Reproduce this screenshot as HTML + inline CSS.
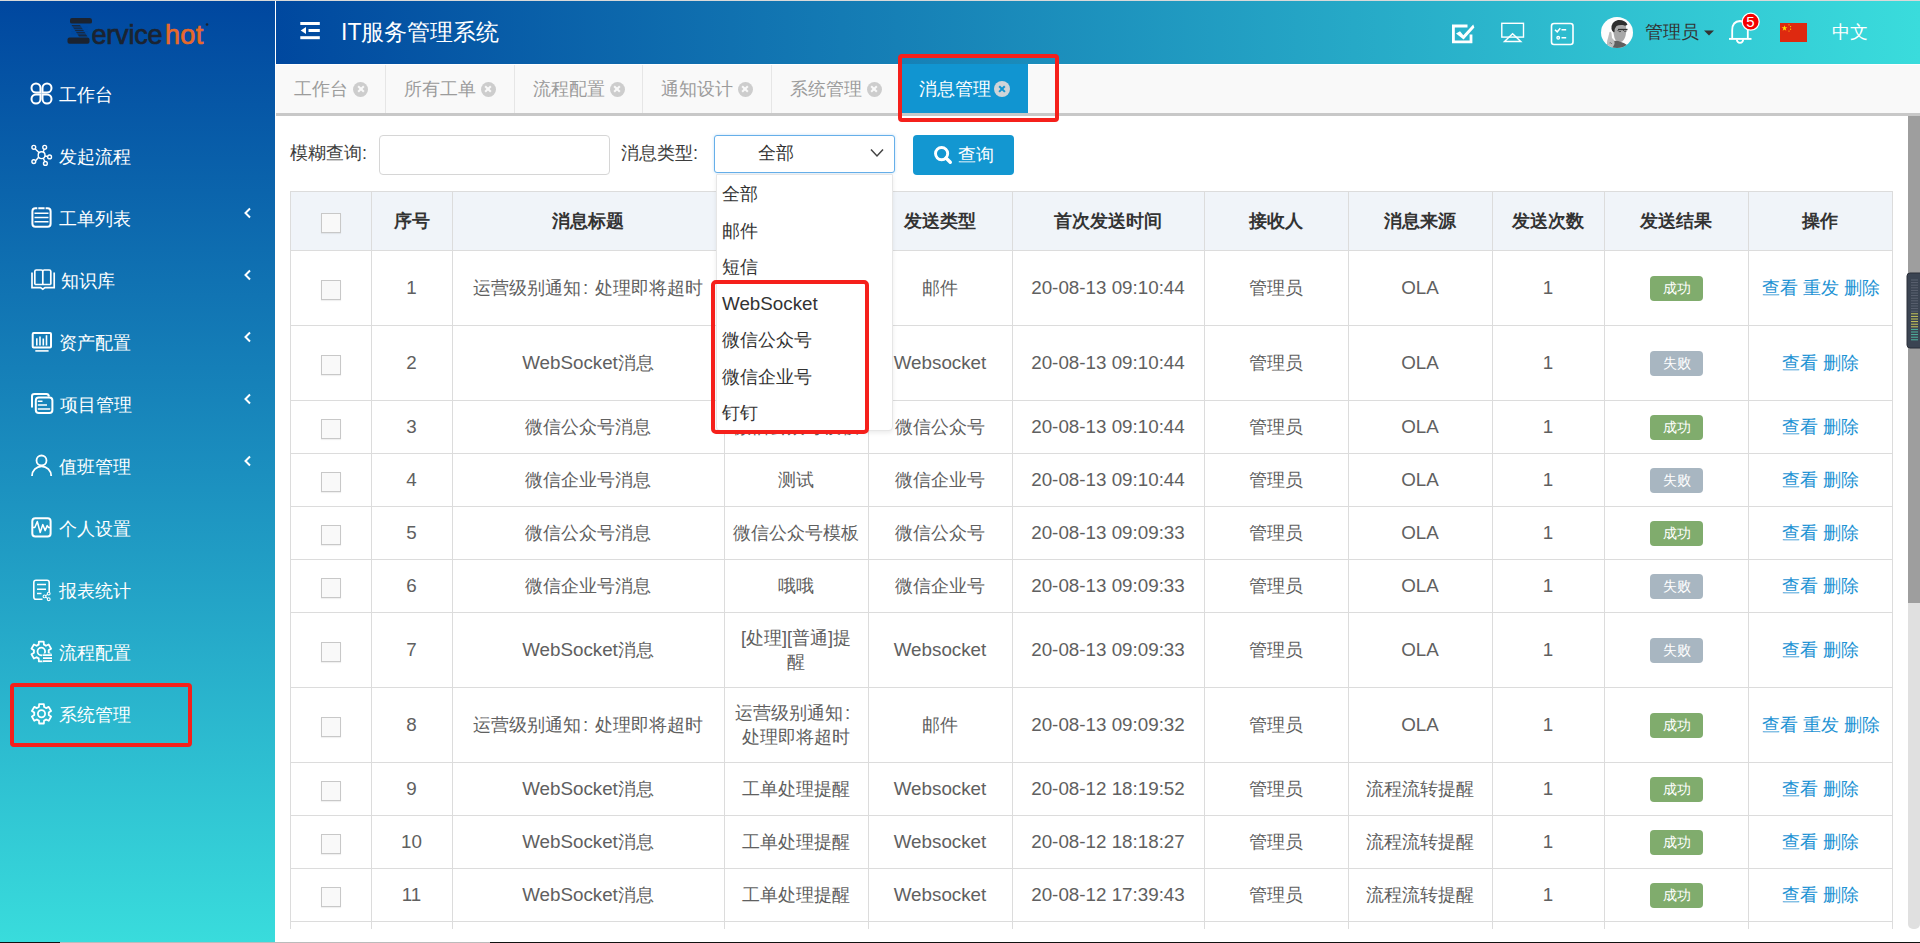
<!DOCTYPE html><html><head><meta charset="utf-8"><style>
*{box-sizing:border-box}
html,body{margin:0;padding:0;width:1920px;height:943px;overflow:hidden;background:#fff;font-family:"Liberation Sans",sans-serif;}
.a{position:absolute}
#topline{left:0;top:0;width:1920px;height:1px;background:#d9d9d9}
#side{left:0;top:1px;width:275px;height:942px;background:linear-gradient(to bottom,#00479f 0%,#1b8fbf 50%,#39dcdc 100%)}
#hdr{left:276px;top:1px;width:1644px;height:63px;background:linear-gradient(to right,#00489f 0%,#3adcdc 100%)}
#sline{left:275px;top:1px;width:1px;height:63px;background:rgba(255,255,255,.30)}
.nav{position:absolute;left:58px;color:#fff;font-size:18px;line-height:24px;height:24px;white-space:nowrap}
#tabs{left:276px;top:64px;width:1644px;height:49px;background:#f9f9f9;border-top:1px solid #fff}
#tabline{left:276px;top:113px;width:1644px;height:3px;background:#c8c8c8}
.tab{position:absolute;top:65px;height:48px;border-right:1px solid #e6e6e6;color:#9c9c9c;font-size:18px;line-height:48px;white-space:nowrap}
.tab span{position:absolute;top:0}
.tab .x{position:absolute;top:16.5px;width:15px;height:15px;border-radius:50%;background:#cdcdcd}
.tab .x:before,.tab .x:after{content:"";position:absolute;left:3.5px;top:6.5px;width:8px;height:2px;background:#f9f9f9;transform:rotate(45deg)}
.tab .x:after{transform:rotate(-45deg)}
.tab.act{background:#1195d1;color:#fff;border-right:none;top:64px;height:49px;line-height:50px}
.tab.act .x{top:16.5px;width:16px;height:16px;margin-left:-1.5px}
.tab.act .x{background:#d0d4d8}
.tab.act .x:before,.tab.act .x:after{background:#1195d1;left:4px;top:7px;width:8px;height:2.2px}
.lbl{position:absolute;font-size:18px;color:#3d3d3d;line-height:24px;white-space:nowrap}
.cell{position:absolute;display:flex;align-items:center;justify-content:center;text-align:center;font-size:18px;color:#606060;line-height:24px}
.hcell{position:absolute;display:flex;align-items:center;justify-content:center;font-size:18px;font-weight:bold;color:#333;line-height:24px}
.cb{position:absolute;width:20px;height:20px;border:1px solid #c8c8c8;background:#f9f9f9;box-shadow:0 1px 1px rgba(0,0,0,.06)}
.badge{position:absolute;width:53px;height:25px;border-radius:4px;color:#fff;font-size:14px;line-height:25px;text-align:center}
.ok{background:#80ac6d}
.fail{background:#a8b6c1}
.act-links{color:#1e93d4}
.en{font-size:18.8px}
.col{display:inline-block;width:14px;text-align:left;padding-left:2px;font-size:18.8px}
.dd{position:absolute;font-size:18px;color:#333;line-height:24px;white-space:nowrap}
</style></head><body>
<div id="topline" class="a"></div><div id="side" class="a"></div><div id="hdr" class="a"></div><div id="sline" class="a"></div>
<svg class="a" style="left:0;top:0" width="275" height="60" viewBox="0 0 275 60">
<g fill="#1b2330">
<path d="M72,18 H90 Q92,18 92,20.5 V22 Q92,23.5 90,23.5 H72 Q70,23.5 70,22 V20 Q70,18 72,18Z"/>
<path d="M69.5,37.5 H87.5 Q89.5,37.5 89.5,39.5 V41.8 Q89.5,43.8 87.5,43.8 H69.5 Q67.5,43.8 67.5,41.8 V39.5 Q67.5,37.5 69.5,37.5Z"/>
<path d="M71.5,25 H80 L87.5,36.5 H79Z" opacity="0.85"/>
</g>
<g stroke="#00489f" stroke-width="0.9"><line x1="71" y1="27" x2="88" y2="27"/><line x1="71" y1="29.3" x2="88" y2="29.3"/><line x1="71" y1="31.6" x2="88" y2="31.6"/><line x1="71" y1="33.9" x2="88" y2="33.9"/></g>
<text x="91.5" y="43.7" font-family="Liberation Sans" font-size="27" fill="#1b2330" stroke="#1b2330" stroke-width="0.7" letter-spacing="-0.2">ervice</text>
<text x="165" y="43.7" font-family="Liberation Sans" font-size="27" fill="#e8692a" stroke="#e8692a" stroke-width="0.7" letter-spacing="0.3">hot</text>
<circle cx="207" cy="24.5" r="1.3" fill="#1b2330"/>
</svg>
<svg class="a" style="left:0;top:0" width="275" height="943" viewBox="0 0 275 943" fill="none" stroke="#fff" stroke-width="2"><path d="M40.5,92.5 L36,92.5 A4.5,4.5 0 0 1 31.5,88 A4.5,4.5 0 0 1 36,83.5 A4.5,4.5 0 0 1 40.5,88 Z"/><path d="M42.5,92.5 L42.5,88 A4.5,4.5 0 0 1 47,83.5 A4.5,4.5 0 0 1 51.5,88 A4.5,4.5 0 0 1 47,92.5 Z"/><path d="M40.5,94.5 L40.5,99 A4.5,4.5 0 0 1 36,103.5 A4.5,4.5 0 0 1 31.5,99 A4.5,4.5 0 0 1 36,94.5 Z"/><path d="M42.5,94.5 L47,94.5 A4.5,4.5 0 0 1 51.5,99 A4.5,4.5 0 0 1 47,103.5 A4.5,4.5 0 0 1 42.5,99 Z"/><g stroke-width="1.4"><circle cx="41.6" cy="155.2" r="3.4"/><circle cx="33.8" cy="147.3" r="1.9"/><circle cx="44.7" cy="147.3" r="1.9"/><circle cx="49.6" cy="156.9" r="1.9"/><circle cx="33.8" cy="161.6" r="1.9"/><circle cx="45.4" cy="163.4" r="1.9"/><path d="M35.1,148.7 L39.2,152.8 M44.2,149.1 L43.2,152.2 M47.7,156.5 L45,156 M35.6,160.8 L38.6,157.3 M44.8,161.5 L43.3,158.2"/></g><rect x="32.4" y="208.3" width="18.2" height="18.4" rx="3"/><g stroke-width="1.6"><path d="M34.5,213.2 H48.5 M34.5,217.5 H48.5 M34.5,221.8 H48.5"/></g><g fill="#0c66ad" stroke="none"><rect x="37.3" y="206.8" width="1" height="3"/><rect x="44.6" y="206.8" width="1" height="3"/></g><g stroke-width="1.7"><path d="M32,272.5 V287.6 H40.6 L42.8,289.2 L45,287.6 H54.2 V272.5"/><path d="M34.8,284.5 V271.5 Q34.8,270 36.3,270 H41.3 Q42.8,270 42.8,271.5 V284.5 M42.8,271.5 Q42.8,270 44.3,270 H49.3 Q50.8,270 50.8,271.5 V284.5 M34.8,284.5 H50.8"/></g><rect x="32.7" y="333" width="18.3" height="14.6" rx="1"/><path stroke-width="1.6" d="M35.3,350.9 H48.6"/><g stroke-width="1.6"><path d="M36.8,345.5 V338.3 M40,345.5 V336.5 M43.3,345.5 V338.5 M46.5,345.5 V335.3"/></g><path d="M32,407.5 V396 Q32,393.9 34.5,393.9 H46.5 Q48.6,393.9 49,396.5"/><rect x="35.8" y="397.5" width="16.6" height="15.4" rx="3"/><g stroke-width="1.6"><path d="M37.8,401.2 H42.5 M37.8,405 H47 M37.8,409 H50.2"/></g><g stroke-width="1.8"><circle cx="41.5" cy="460.5" r="5"/><path d="M32,476 A9.6,9.6 0 0 1 51.2,476"/></g><rect x="32.3" y="518.2" width="18.3" height="18.3" rx="3"/><path stroke-width="1.5" stroke-linejoin="round" d="M33,527.5 H34.8 L37.3,521.5 L40.2,532.5 L42.8,524.6 L45.1,530.6 L47.2,525.6 L48.6,527.5 H50"/><path stroke-width="1.6" d="M42.5,599.3 H36 Q33.8,599.3 33.8,597 V582.5 Q33.8,580.3 36,580.3 H47 Q49.2,580.3 49.2,582.5 V592.5"/><g stroke-width="1.5"><path d="M37,584.5 H46 M37,589.3 H46 M37,593.6 H41.5"/></g><g stroke-width="1.1"><circle cx="44.5" cy="596.4" r="1.4"/><circle cx="48.7" cy="593.6" r="1.4"/><circle cx="48.7" cy="599.2" r="1.4"/><path d="M45.8,595.6 L47.5,594.4 M45.8,597.2 L47.5,598.4"/></g><g stroke-width="1.8"><path d="M38.69,644.57 L38.88,641.59 L43.72,641.59 L43.91,644.57 A7.40,7.40 0 0 1 45.99,645.78 L48.67,644.45 L51.09,648.65 L48.60,650.29 A7.40,7.40 0 0 1 48.60,652.71 L51.09,654.35 L48.67,658.55 L45.99,657.22 A7.40,7.40 0 0 1 43.91,658.43 L43.72,661.41 L38.88,661.41 L38.69,658.43 A7.40,7.40 0 0 1 36.61,657.22 L33.93,658.55 L31.51,654.35 L34.00,652.71 A7.40,7.40 0 0 1 34.00,650.29 L31.51,648.65 L33.93,644.45 L36.61,645.78 A7.40,7.40 0 0 1 38.69,644.57Z" stroke-linejoin="round"/><circle cx="41.3" cy="651.5" r="3.8"/></g><rect x="42.5" y="653.5" width="11" height="9" fill="#24abc9" stroke="none"/><g stroke-width="1.7"><path d="M43,655.1 H52 M43,658.2 H52 M43,661.2 H52"/></g><g stroke-width="1.8"><path d="M38.93,706.97 L39.12,704.09 L43.88,704.09 L44.07,706.97 A7.30,7.30 0 0 1 46.13,708.16 L48.72,706.88 L51.10,711.00 L48.70,712.61 A7.30,7.30 0 0 1 48.70,714.99 L51.10,716.60 L48.72,720.72 L46.13,719.44 A7.30,7.30 0 0 1 44.07,720.63 L43.88,723.51 L39.12,723.51 L38.93,720.63 A7.30,7.30 0 0 1 36.87,719.44 L34.28,720.72 L31.90,716.60 L34.30,714.99 A7.30,7.30 0 0 1 34.30,712.61 L31.90,711.00 L34.28,706.88 L36.87,708.16 A7.30,7.30 0 0 1 38.93,706.97Z" stroke-linejoin="round"/><circle cx="41.5" cy="713.8" r="3.6"/></g><path stroke-width="2" d="M250,208.5 L245.5,213.0 L250,217.5"/><path stroke-width="2" d="M250,270.5 L245.5,275.0 L250,279.5"/><path stroke-width="2" d="M250,332.5 L245.5,337.0 L250,341.5"/><path stroke-width="2" d="M250,394.5 L245.5,399.0 L250,403.5"/><path stroke-width="2" d="M250,456.5 L245.5,461.0 L250,465.5"/></svg>
<div class="nav" style="top:83px;left:59px">工作台</div>
<div class="nav" style="top:145px;left:59px">发起流程</div>
<div class="nav" style="top:207px;left:59px">工单列表</div>
<div class="nav" style="top:269px;left:61px">知识库</div>
<div class="nav" style="top:331px;left:59px">资产配置</div>
<div class="nav" style="top:393px;left:60px">项目管理</div>
<div class="nav" style="top:455px;left:59px">值班管理</div>
<div class="nav" style="top:517px;left:59px">个人设置</div>
<div class="nav" style="top:579px;left:59px">报表统计</div>
<div class="nav" style="top:641px;left:59px">流程配置</div>
<div class="nav" style="top:703px;left:59px">系统管理</div>
<svg class="a" style="left:296px;top:18px" width="30" height="26" viewBox="296 18 30 26" fill="#fff">
<rect x="300.3" y="22" width="19.5" height="3"/><rect x="308.5" y="29" width="11.3" height="3"/><rect x="300.3" y="36.2" width="19.5" height="3"/>
<path d="M300.7,30.5 L306,27 V34Z"/></svg>
<div class="a" style="left:341px;top:17px;font-size:23px;line-height:30px;color:#fff;white-space:nowrap">IT服务管理系统</div>
<svg class="a" style="left:1440px;top:10px" width="480" height="45" viewBox="1440 10 480 45" fill="none" stroke="#fff" stroke-width="2">
<path stroke-width="2.8" stroke-linecap="butt" d="M1467.5,26 H1453.4 V41.8 H1471 V34.5"/>
<path fill="#fff" stroke="none" d="M1456,33.6 L1460,31.2 L1463.3,35.2 L1473.2,24.6 L1474.4,27.4 L1463.6,39.6 Z"/>
<rect x="1501.8" y="23.3" width="21.7" height="13.8" stroke-width="1.4"/>
<path stroke-width="1.4" d="M1504.5,41.5 L1512.6,33.8 L1520.8,41.5 Z"/>
<rect x="1551.5" y="23.5" width="21.5" height="21" rx="2.5" stroke-width="1.6"/>
<path stroke-width="1.5" d="M1555,29.7 L1557.2,31.8 L1560.3,28.3 M1561.5,29.8 H1566.2 M1561.5,37.8 H1566.2"/>
<circle cx="1558.2" cy="37.8" r="1.3" stroke-width="1.3"/>
</svg>
<svg class="a" style="left:1600px;top:16px" width="34" height="34" viewBox="0 0 34 34">
<defs><clipPath id="av"><ellipse cx="17" cy="16.5" rx="16" ry="15.5"/></clipPath>
<filter id="bl"><feGaussianBlur stdDeviation="0.5"/></filter></defs>
<ellipse cx="17" cy="16.5" rx="16" ry="15.5" fill="#fdfdfd"/>
<g clip-path="url(#av)"><g filter="url(#bl)">
<path d="M13.5,17 Q13,8 18,6.5 Q24,6 26,10 Q27,15 25.5,20 Q24,25 21,26 Q16,26.5 14.5,22Z" fill="#a8a8a8"/>
<path d="M11.5,13 Q11,5.5 18,4 Q25,3.5 27.5,8.5 Q26,10.5 23,9 Q19,8.5 16.5,10 Q14.5,12 14.5,16 Q12.5,17 11.5,13Z" fill="#2e2e2e"/>
<path d="M18,13.5 H27.5" stroke="#333" stroke-width="1.3"/>
<path d="M17.5,14 Q19,16.5 21,15.5 M23,14 Q24.5,16.5 26.5,15" stroke="#444" stroke-width="0.9" fill="none"/>
<path d="M4,34 Q6,27 12,25 Q17,24 21,26 Q28,28 31,34Z" fill="#5e5e5e"/>
<path d="M8,33 Q6,27 8,22 L9.5,16 Q11,15 11.5,17 L12,22 Q15,24 14.5,28 Q13,32 10,33Z" fill="#bdbdbd"/>
<path d="M9.5,27 Q11,26 12,28" stroke="#666" stroke-width="0.8" fill="none"/>
</g></g></svg>
<div class="a" style="left:1645px;top:18px;font-size:18px;line-height:28px;color:#333;white-space:nowrap">管理员</div>
<svg class="a" style="left:1700px;top:28px" width="18" height="10" viewBox="1700 28 18 10"><path d="M1704,30.6 H1714 L1709,35.6Z" fill="#333"/></svg>
<svg class="a" style="left:1720px;top:10px" width="50" height="40" viewBox="1720 10 50 40" fill="none" stroke="#fff" stroke-width="1.8">
<path d="M1732.2,38.8 V30 Q1732.2,21.6 1740,21 Q1747.8,21.6 1747.8,30 V38.8"/><path d="M1729,38.9 H1751.5" stroke-width="1.9"/>
<path d="M1736.8,39.5 Q1737,42.8 1740,42.8 Q1743,42.8 1743.2,39.5"/>
<circle cx="1750.7" cy="21.7" r="8.5" fill="#f50000" stroke="#fff" stroke-width="1.3"/>
</svg>
<div class="a" style="left:1743.5px;top:11.5px;width:14px;text-align:center;font-size:15px;line-height:20px;color:#fff">5</div>
<svg class="a" style="left:1780px;top:23px" width="27" height="19" viewBox="0 0 27 19">
<rect width="27" height="19" fill="#de2910"/>
<path fill="#ffde00" d="M4.5,2.2 L5.2,4.3 H7.4 L5.6,5.6 L6.3,7.7 L4.5,6.4 L2.7,7.7 L3.4,5.6 L1.6,4.3 H3.8Z"/>
<g fill="#ffde00"><circle cx="9" cy="1.8" r="0.6"/><circle cx="10.6" cy="3.6" r="0.6"/><circle cx="10.6" cy="6.2" r="0.6"/><circle cx="9" cy="8" r="0.6"/></g>
</svg>
<div class="a" style="left:1832px;top:18px;font-size:18px;line-height:28px;color:#fff;white-space:nowrap">中文</div>
<div id="tabs" class="a"></div><div id="tabline" class="a"></div>
<div class="tab" style="left:276px;width:110px"><span style="left:18.0px">工作台</span><div class="x" style="left:77.0px"></div></div>
<div class="tab" style="left:386px;width:129px"><span style="left:17.5px">所有工单</span><div class="x" style="left:94.5px"></div></div>
<div class="tab" style="left:515px;width:128px"><span style="left:17.5px">流程配置</span><div class="x" style="left:94.5px"></div></div>
<div class="tab" style="left:643px;width:129px"><span style="left:17.5px">通知设计</span><div class="x" style="left:94.5px"></div></div>
<div class="tab" style="left:772px;width:131px"><span style="left:17.5px">系统管理</span><div class="x" style="left:94.5px"></div></div>
<div class="tab act" style="left:902px;width:126px"><span style="left:16.8px">消息管理</span><div class="x" style="left:93.8px"></div></div>
<div class="a" style="left:898px;top:54px;width:161px;height:68px;border:4px solid #f5201b;border-radius:4px"></div>
<div class="lbl" style="left:290px;top:141px">模糊查询:</div>
<div class="a" style="left:379px;top:135px;width:231px;height:40px;border:1px solid #d6d6d6;border-radius:4px;background:#fff"></div>
<div class="lbl" style="left:621px;top:141px">消息类型:</div>
<div class="a" style="left:714px;top:135px;width:181px;height:38px;border:1px solid #66afe9;border-radius:3px;background:#fff;box-shadow:0 0 3px rgba(102,175,233,.4)"></div>
<div class="a" style="left:758px;top:141px;font-size:18px;line-height:24px;color:#333">全部</div>
<svg class="a" style="left:868px;top:146px" width="18" height="14" viewBox="868 146 18 14"><path d="M871,149.5 L877,156 L883,149.5" fill="none" stroke="#444" stroke-width="1.5"/></svg>
<div class="a" style="left:913px;top:135px;width:101px;height:40px;border-radius:4px;background:#1397d1"></div>
<svg class="a" style="left:930px;top:143px" width="26" height="24" viewBox="930 143 26 24"><circle cx="941.6" cy="153.6" r="6.1" fill="none" stroke="#fff" stroke-width="2.9"/><path d="M946,158 L950.3,162.3" stroke="#fff" stroke-width="3.4" stroke-linecap="round"/></svg>
<div class="a" style="left:958px;top:142.5px;font-size:18px;line-height:24px;color:#fff">查询</div>
<div class="a" style="left:290px;top:191px;width:1602px;height:59px;background:#f0f4f9"></div>
<div class="cb" style="left:321px;top:213px"></div>
<div class="hcell" style="left:371px;top:191px;width:81px;height:59px">序号</div>
<div class="hcell" style="left:452px;top:191px;width:272px;height:59px">消息标题</div>
<div class="hcell" style="left:724px;top:191px;width:144px;height:59px">消息内容</div>
<div class="hcell" style="left:868px;top:191px;width:144px;height:59px">发送类型</div>
<div class="hcell" style="left:1012px;top:191px;width:192px;height:59px">首次发送时间</div>
<div class="hcell" style="left:1204px;top:191px;width:144px;height:59px">接收人</div>
<div class="hcell" style="left:1348px;top:191px;width:144px;height:59px">消息来源</div>
<div class="hcell" style="left:1492px;top:191px;width:112px;height:59px">发送次数</div>
<div class="hcell" style="left:1604px;top:191px;width:144px;height:59px">发送结果</div>
<div class="hcell" style="left:1748px;top:191px;width:144px;height:59px">操作</div>
<div class="cb" style="left:321px;top:280px"></div>
<div class="cell" style="left:371px;top:250px;width:81px;height:75px"><div><span class="en">1</span></div></div>
<div class="cell" style="left:452px;top:250px;width:272px;height:75px"><div>运营级别通知<span class="col">:</span>处理即将超时</div></div>
<div class="cell" style="left:724px;top:250px;width:144px;height:75px"><div>运营级别通知<span class="col">:</span><br>处理即将超时</div></div>
<div class="cell" style="left:868px;top:250px;width:144px;height:75px"><div>邮件</div></div>
<div class="cell" style="left:1012px;top:250px;width:192px;height:75px"><div><span class="en">20-08-13 09:10:44</span></div></div>
<div class="cell" style="left:1204px;top:250px;width:144px;height:75px"><div>管理员</div></div>
<div class="cell" style="left:1348px;top:250px;width:144px;height:75px"><div><span class="en">OLA</span></div></div>
<div class="cell" style="left:1492px;top:250px;width:112px;height:75px"><div><span class="en">1</span></div></div>
<div class="badge ok" style="left:1650px;top:276px">成功</div>
<div class="cell act-links" style="left:1749px;top:250px;width:144px;height:75px">查看 重发 删除</div>
<div class="cb" style="left:321px;top:355px"></div>
<div class="cell" style="left:371px;top:325px;width:81px;height:75px"><div><span class="en">2</span></div></div>
<div class="cell" style="left:452px;top:325px;width:272px;height:75px"><div><span class="en">WebSocket</span>消息</div></div>
<div class="cell" style="left:724px;top:325px;width:144px;height:75px"><div>[处理][普通]提<br>醒</div></div>
<div class="cell" style="left:868px;top:325px;width:144px;height:75px"><div><span class="en">Websocket</span></div></div>
<div class="cell" style="left:1012px;top:325px;width:192px;height:75px"><div><span class="en">20-08-13 09:10:44</span></div></div>
<div class="cell" style="left:1204px;top:325px;width:144px;height:75px"><div>管理员</div></div>
<div class="cell" style="left:1348px;top:325px;width:144px;height:75px"><div><span class="en">OLA</span></div></div>
<div class="cell" style="left:1492px;top:325px;width:112px;height:75px"><div><span class="en">1</span></div></div>
<div class="badge fail" style="left:1650px;top:351px">失败</div>
<div class="cell act-links" style="left:1749px;top:325px;width:144px;height:75px">查看 删除</div>
<div class="cb" style="left:321px;top:419px"></div>
<div class="cell" style="left:371px;top:400px;width:81px;height:53px"><div><span class="en">3</span></div></div>
<div class="cell" style="left:452px;top:400px;width:272px;height:53px"><div>微信公众号消息</div></div>
<div class="cell" style="left:724px;top:400px;width:144px;height:53px"><div>微信公众号模板</div></div>
<div class="cell" style="left:868px;top:400px;width:144px;height:53px"><div>微信公众号</div></div>
<div class="cell" style="left:1012px;top:400px;width:192px;height:53px"><div><span class="en">20-08-13 09:10:44</span></div></div>
<div class="cell" style="left:1204px;top:400px;width:144px;height:53px"><div>管理员</div></div>
<div class="cell" style="left:1348px;top:400px;width:144px;height:53px"><div><span class="en">OLA</span></div></div>
<div class="cell" style="left:1492px;top:400px;width:112px;height:53px"><div><span class="en">1</span></div></div>
<div class="badge ok" style="left:1650px;top:415px">成功</div>
<div class="cell act-links" style="left:1749px;top:400px;width:144px;height:53px">查看 删除</div>
<div class="cb" style="left:321px;top:472px"></div>
<div class="cell" style="left:371px;top:453px;width:81px;height:53px"><div><span class="en">4</span></div></div>
<div class="cell" style="left:452px;top:453px;width:272px;height:53px"><div>微信企业号消息</div></div>
<div class="cell" style="left:724px;top:453px;width:144px;height:53px"><div>测试</div></div>
<div class="cell" style="left:868px;top:453px;width:144px;height:53px"><div>微信企业号</div></div>
<div class="cell" style="left:1012px;top:453px;width:192px;height:53px"><div><span class="en">20-08-13 09:10:44</span></div></div>
<div class="cell" style="left:1204px;top:453px;width:144px;height:53px"><div>管理员</div></div>
<div class="cell" style="left:1348px;top:453px;width:144px;height:53px"><div><span class="en">OLA</span></div></div>
<div class="cell" style="left:1492px;top:453px;width:112px;height:53px"><div><span class="en">1</span></div></div>
<div class="badge fail" style="left:1650px;top:468px">失败</div>
<div class="cell act-links" style="left:1749px;top:453px;width:144px;height:53px">查看 删除</div>
<div class="cb" style="left:321px;top:525px"></div>
<div class="cell" style="left:371px;top:506px;width:81px;height:53px"><div><span class="en">5</span></div></div>
<div class="cell" style="left:452px;top:506px;width:272px;height:53px"><div>微信公众号消息</div></div>
<div class="cell" style="left:724px;top:506px;width:144px;height:53px"><div>微信公众号模板</div></div>
<div class="cell" style="left:868px;top:506px;width:144px;height:53px"><div>微信公众号</div></div>
<div class="cell" style="left:1012px;top:506px;width:192px;height:53px"><div><span class="en">20-08-13 09:09:33</span></div></div>
<div class="cell" style="left:1204px;top:506px;width:144px;height:53px"><div>管理员</div></div>
<div class="cell" style="left:1348px;top:506px;width:144px;height:53px"><div><span class="en">OLA</span></div></div>
<div class="cell" style="left:1492px;top:506px;width:112px;height:53px"><div><span class="en">1</span></div></div>
<div class="badge ok" style="left:1650px;top:521px">成功</div>
<div class="cell act-links" style="left:1749px;top:506px;width:144px;height:53px">查看 删除</div>
<div class="cb" style="left:321px;top:578px"></div>
<div class="cell" style="left:371px;top:559px;width:81px;height:53px"><div><span class="en">6</span></div></div>
<div class="cell" style="left:452px;top:559px;width:272px;height:53px"><div>微信企业号消息</div></div>
<div class="cell" style="left:724px;top:559px;width:144px;height:53px"><div>哦哦</div></div>
<div class="cell" style="left:868px;top:559px;width:144px;height:53px"><div>微信企业号</div></div>
<div class="cell" style="left:1012px;top:559px;width:192px;height:53px"><div><span class="en">20-08-13 09:09:33</span></div></div>
<div class="cell" style="left:1204px;top:559px;width:144px;height:53px"><div>管理员</div></div>
<div class="cell" style="left:1348px;top:559px;width:144px;height:53px"><div><span class="en">OLA</span></div></div>
<div class="cell" style="left:1492px;top:559px;width:112px;height:53px"><div><span class="en">1</span></div></div>
<div class="badge fail" style="left:1650px;top:574px">失败</div>
<div class="cell act-links" style="left:1749px;top:559px;width:144px;height:53px">查看 删除</div>
<div class="cb" style="left:321px;top:642px"></div>
<div class="cell" style="left:371px;top:612px;width:81px;height:75px"><div><span class="en">7</span></div></div>
<div class="cell" style="left:452px;top:612px;width:272px;height:75px"><div><span class="en">WebSocket</span>消息</div></div>
<div class="cell" style="left:724px;top:612px;width:144px;height:75px"><div>[处理][普通]提<br>醒</div></div>
<div class="cell" style="left:868px;top:612px;width:144px;height:75px"><div><span class="en">Websocket</span></div></div>
<div class="cell" style="left:1012px;top:612px;width:192px;height:75px"><div><span class="en">20-08-13 09:09:33</span></div></div>
<div class="cell" style="left:1204px;top:612px;width:144px;height:75px"><div>管理员</div></div>
<div class="cell" style="left:1348px;top:612px;width:144px;height:75px"><div><span class="en">OLA</span></div></div>
<div class="cell" style="left:1492px;top:612px;width:112px;height:75px"><div><span class="en">1</span></div></div>
<div class="badge fail" style="left:1650px;top:638px">失败</div>
<div class="cell act-links" style="left:1749px;top:612px;width:144px;height:75px">查看 删除</div>
<div class="cb" style="left:321px;top:717px"></div>
<div class="cell" style="left:371px;top:687px;width:81px;height:75px"><div><span class="en">8</span></div></div>
<div class="cell" style="left:452px;top:687px;width:272px;height:75px"><div>运营级别通知<span class="col">:</span>处理即将超时</div></div>
<div class="cell" style="left:724px;top:687px;width:144px;height:75px"><div>运营级别通知<span class="col">:</span><br>处理即将超时</div></div>
<div class="cell" style="left:868px;top:687px;width:144px;height:75px"><div>邮件</div></div>
<div class="cell" style="left:1012px;top:687px;width:192px;height:75px"><div><span class="en">20-08-13 09:09:32</span></div></div>
<div class="cell" style="left:1204px;top:687px;width:144px;height:75px"><div>管理员</div></div>
<div class="cell" style="left:1348px;top:687px;width:144px;height:75px"><div><span class="en">OLA</span></div></div>
<div class="cell" style="left:1492px;top:687px;width:112px;height:75px"><div><span class="en">1</span></div></div>
<div class="badge ok" style="left:1650px;top:713px">成功</div>
<div class="cell act-links" style="left:1749px;top:687px;width:144px;height:75px">查看 重发 删除</div>
<div class="cb" style="left:321px;top:781px"></div>
<div class="cell" style="left:371px;top:762px;width:81px;height:53px"><div><span class="en">9</span></div></div>
<div class="cell" style="left:452px;top:762px;width:272px;height:53px"><div><span class="en">WebSocket</span>消息</div></div>
<div class="cell" style="left:724px;top:762px;width:144px;height:53px"><div>工单处理提醒</div></div>
<div class="cell" style="left:868px;top:762px;width:144px;height:53px"><div><span class="en">Websocket</span></div></div>
<div class="cell" style="left:1012px;top:762px;width:192px;height:53px"><div><span class="en">20-08-12 18:19:52</span></div></div>
<div class="cell" style="left:1204px;top:762px;width:144px;height:53px"><div>管理员</div></div>
<div class="cell" style="left:1348px;top:762px;width:144px;height:53px"><div>流程流转提醒</div></div>
<div class="cell" style="left:1492px;top:762px;width:112px;height:53px"><div><span class="en">1</span></div></div>
<div class="badge ok" style="left:1650px;top:777px">成功</div>
<div class="cell act-links" style="left:1749px;top:762px;width:144px;height:53px">查看 删除</div>
<div class="cb" style="left:321px;top:834px"></div>
<div class="cell" style="left:371px;top:815px;width:81px;height:53px"><div><span class="en">10</span></div></div>
<div class="cell" style="left:452px;top:815px;width:272px;height:53px"><div><span class="en">WebSocket</span>消息</div></div>
<div class="cell" style="left:724px;top:815px;width:144px;height:53px"><div>工单处理提醒</div></div>
<div class="cell" style="left:868px;top:815px;width:144px;height:53px"><div><span class="en">Websocket</span></div></div>
<div class="cell" style="left:1012px;top:815px;width:192px;height:53px"><div><span class="en">20-08-12 18:18:27</span></div></div>
<div class="cell" style="left:1204px;top:815px;width:144px;height:53px"><div>管理员</div></div>
<div class="cell" style="left:1348px;top:815px;width:144px;height:53px"><div>流程流转提醒</div></div>
<div class="cell" style="left:1492px;top:815px;width:112px;height:53px"><div><span class="en">1</span></div></div>
<div class="badge ok" style="left:1650px;top:830px">成功</div>
<div class="cell act-links" style="left:1749px;top:815px;width:144px;height:53px">查看 删除</div>
<div class="cb" style="left:321px;top:887px"></div>
<div class="cell" style="left:371px;top:868px;width:81px;height:53px"><div><span class="en">11</span></div></div>
<div class="cell" style="left:452px;top:868px;width:272px;height:53px"><div><span class="en">WebSocket</span>消息</div></div>
<div class="cell" style="left:724px;top:868px;width:144px;height:53px"><div>工单处理提醒</div></div>
<div class="cell" style="left:868px;top:868px;width:144px;height:53px"><div><span class="en">Websocket</span></div></div>
<div class="cell" style="left:1012px;top:868px;width:192px;height:53px"><div><span class="en">20-08-12 17:39:43</span></div></div>
<div class="cell" style="left:1204px;top:868px;width:144px;height:53px"><div>管理员</div></div>
<div class="cell" style="left:1348px;top:868px;width:144px;height:53px"><div>流程流转提醒</div></div>
<div class="cell" style="left:1492px;top:868px;width:112px;height:53px"><div><span class="en">1</span></div></div>
<div class="badge ok" style="left:1650px;top:883px">成功</div>
<div class="cell act-links" style="left:1749px;top:868px;width:144px;height:53px">查看 删除</div>
<div class="cb" style="left:321px;top:940px"></div>
<div class="cell" style="left:371px;top:921px;width:81px;height:53px"><div><span class="en">12</span></div></div>
<div class="cell" style="left:452px;top:921px;width:272px;height:53px"><div><span class="en">WebSocket</span>消息</div></div>
<div class="cell" style="left:724px;top:921px;width:144px;height:53px"><div>工单处理提醒</div></div>
<div class="cell" style="left:868px;top:921px;width:144px;height:53px"><div><span class="en">Websocket</span></div></div>
<div class="cell" style="left:1012px;top:921px;width:192px;height:53px"><div><span class="en">20-08-12 17:39:43</span></div></div>
<div class="cell" style="left:1204px;top:921px;width:144px;height:53px"><div>管理员</div></div>
<div class="cell" style="left:1348px;top:921px;width:144px;height:53px"><div>流程流转提醒</div></div>
<div class="cell" style="left:1492px;top:921px;width:112px;height:53px"><div><span class="en">1</span></div></div>
<div class="badge ok" style="left:1650px;top:936px">成功</div>
<div class="cell act-links" style="left:1749px;top:921px;width:144px;height:53px">查看 删除</div>
<div class="a" style="left:0;top:0;width:1920px;height:929px;overflow:hidden;pointer-events:none">
<div class="a" style="left:290px;top:191px;width:1px;height:740px;background:#dcdcdc"></div>
<div class="a" style="left:371px;top:191px;width:1px;height:740px;background:#dcdcdc"></div>
<div class="a" style="left:452px;top:191px;width:1px;height:740px;background:#dcdcdc"></div>
<div class="a" style="left:724px;top:191px;width:1px;height:740px;background:#dcdcdc"></div>
<div class="a" style="left:868px;top:191px;width:1px;height:740px;background:#dcdcdc"></div>
<div class="a" style="left:1012px;top:191px;width:1px;height:740px;background:#dcdcdc"></div>
<div class="a" style="left:1204px;top:191px;width:1px;height:740px;background:#dcdcdc"></div>
<div class="a" style="left:1348px;top:191px;width:1px;height:740px;background:#dcdcdc"></div>
<div class="a" style="left:1492px;top:191px;width:1px;height:740px;background:#dcdcdc"></div>
<div class="a" style="left:1604px;top:191px;width:1px;height:740px;background:#dcdcdc"></div>
<div class="a" style="left:1748px;top:191px;width:1px;height:740px;background:#dcdcdc"></div>
<div class="a" style="left:1892px;top:191px;width:1px;height:740px;background:#dcdcdc"></div>
<div class="a" style="left:290px;top:191px;width:1603px;height:1px;background:#dcdcdc"></div>
<div class="a" style="left:290px;top:250px;width:1603px;height:1px;background:#dcdcdc"></div>
<div class="a" style="left:290px;top:325px;width:1603px;height:1px;background:#dcdcdc"></div>
<div class="a" style="left:290px;top:400px;width:1603px;height:1px;background:#dcdcdc"></div>
<div class="a" style="left:290px;top:453px;width:1603px;height:1px;background:#dcdcdc"></div>
<div class="a" style="left:290px;top:506px;width:1603px;height:1px;background:#dcdcdc"></div>
<div class="a" style="left:290px;top:559px;width:1603px;height:1px;background:#dcdcdc"></div>
<div class="a" style="left:290px;top:612px;width:1603px;height:1px;background:#dcdcdc"></div>
<div class="a" style="left:290px;top:687px;width:1603px;height:1px;background:#dcdcdc"></div>
<div class="a" style="left:290px;top:762px;width:1603px;height:1px;background:#dcdcdc"></div>
<div class="a" style="left:290px;top:815px;width:1603px;height:1px;background:#dcdcdc"></div>
<div class="a" style="left:290px;top:868px;width:1603px;height:1px;background:#dcdcdc"></div>
<div class="a" style="left:290px;top:921px;width:1603px;height:1px;background:#dcdcdc"></div>
</div>
<div class="a" style="left:276px;top:929px;width:1644px;height:14px;background:#fff"></div>
<div class="a" style="left:716px;top:174px;width:177px;height:257px;background:#fff;border:1px solid #e6e6e6;border-radius:0 0 4px 4px;box-shadow:0 2px 4px rgba(0,0,0,.08)"></div>
<div class="dd" style="left:722px;top:182.0px"><div>全部</div></div>
<div class="dd" style="left:722px;top:218.5px"><div>邮件</div></div>
<div class="dd" style="left:722px;top:255.0px"><div>短信</div></div>
<div class="dd" style="left:722px;top:291.5px"><div><span class="en">WebSocket</span></div></div>
<div class="dd" style="left:722px;top:328.0px"><div>微信公众号</div></div>
<div class="dd" style="left:722px;top:364.5px"><div>微信企业号</div></div>
<div class="dd" style="left:722px;top:401.0px"><div>钉钉</div></div>
<div class="a" style="left:711px;top:280px;width:158px;height:154px;border:4px solid #f5201b;border-radius:5px"></div>
<div class="a" style="left:10px;top:683px;width:182px;height:64px;border:4px solid #f5201b;border-radius:4px"></div>
<div class="a" style="left:1908px;top:116px;width:12px;height:487px;background:#9e9e9e"></div>
<div class="a" style="left:1908px;top:603px;width:12px;height:326px;background:#e0e0e0;border-radius:0 0 5px 5px"></div>
<svg class="a" style="left:1906px;top:272px" width="14" height="77" viewBox="0 0 14 77">
<rect x="1" y="1" width="20" height="75" rx="3" fill="#3b4452" stroke="#2a2f38" stroke-width="1"/>
<g stroke-width="1"><line x1="5" x2="12" y1="8.0" y2="8.0" stroke="#5b6270"/><line x1="5" x2="12" y1="10.6" y2="10.6" stroke="#5b6270"/><line x1="5" x2="12" y1="13.2" y2="13.2" stroke="#5b6270"/><line x1="5" x2="12" y1="15.8" y2="15.8" stroke="#5b6270"/><line x1="5" x2="12" y1="18.4" y2="18.4" stroke="#5b6270"/><line x1="5" x2="12" y1="21.0" y2="21.0" stroke="#5b6270"/><line x1="5" x2="12" y1="23.6" y2="23.6" stroke="#5b6270"/><line x1="5" x2="12" y1="26.2" y2="26.2" stroke="#5b6270"/><line x1="5" x2="12" y1="28.8" y2="28.8" stroke="#5b6270"/><line x1="5" x2="12" y1="31.4" y2="31.4" stroke="#5b6270"/><line x1="5" x2="12" y1="34.0" y2="34.0" stroke="#5b6270"/><line x1="5" x2="12" y1="36.6" y2="36.6" stroke="#5b6270"/><line x1="5" x2="12" y1="39.2" y2="39.2" stroke="#5b6270"/><line x1="5" x2="12" y1="41.8" y2="41.8" stroke="#c9c95a"/><line x1="5" x2="12" y1="44.4" y2="44.4" stroke="#c9c95a"/><line x1="5" x2="12" y1="47.0" y2="47.0" stroke="#c9c95a"/><line x1="5" x2="12" y1="49.6" y2="49.6" stroke="#c9c95a"/><line x1="5" x2="12" y1="52.2" y2="52.2" stroke="#c9c95a"/><line x1="5" x2="12" y1="54.8" y2="54.8" stroke="#c9c95a"/><line x1="5" x2="12" y1="57.4" y2="57.4" stroke="#4fb6a0"/><line x1="5" x2="12" y1="60.0" y2="60.0" stroke="#4fb6a0"/><line x1="5" x2="12" y1="62.6" y2="62.6" stroke="#4fb6a0"/><line x1="5" x2="12" y1="65.2" y2="65.2" stroke="#4fb6a0"/><line x1="5" x2="12" y1="67.8" y2="67.8" stroke="#4fb6a0"/></g></svg>
<div class="a" style="left:0;top:942px;width:1920px;height:1px;background:#111"></div>
<div class="a" style="left:60px;top:942px;width:430px;height:1px;background:#bbb"></div>
</body></html>
